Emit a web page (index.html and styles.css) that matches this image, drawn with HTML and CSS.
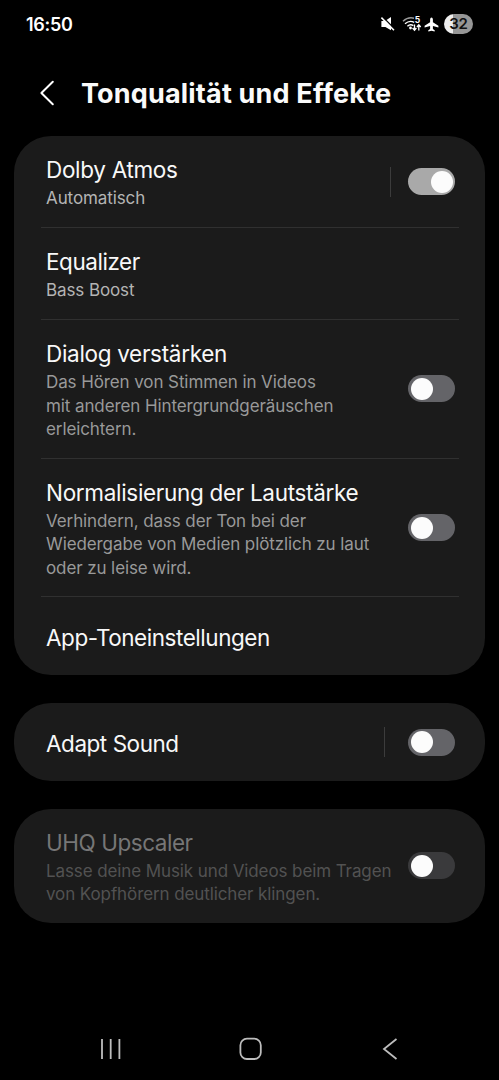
FILE: index.html
```html
<!DOCTYPE html>
<html lang="de">
<head>
<meta charset="utf-8">
<title>Tonqualität und Effekte</title>
<link rel="stylesheet" href="styles.css">
</head>
<body>
<div class="screen">
  <div class="status">
    <span class="clock">16:50</span>
    <div class="status-icons">
      <svg class="mute" width="16" height="16" viewBox="0 0 16 16"><path d="M1.4 5H5L11 1V14.2L5.4 11H1.4Z" fill="#fff"/><path d="M2.4 .8L15.2 13.4" stroke="#000" stroke-width="1.4"/><path d="M1.4 1.6L14 14.2" stroke="#fff" stroke-width="1.5"/></svg>
      <svg class="wifi" width="20" height="16" viewBox="0 0 20 16"><g fill="none" stroke="#fff" stroke-width="1.4"><path d="M1 5.2Q6 .6 12 2.2" stroke="#999"/><path d="M3 7.8Q7.5 3.8 12.2 6.4"/><path d="M5.4 10.2Q8.3 7.6 11.4 9.6"/></g><circle cx="8.5" cy="12" r="1.4" fill="#fff"/><text x="12.8" y="7" class="band">5</text><path d="M12.5 8.5V14M10.6 12L12.5 14.2 14.4 12M16.8 14.5V9M14.9 11L16.8 8.8 18.7 11" fill="none" stroke="#fff" stroke-width="1.3"/></svg>
      <svg class="plane" width="15" height="15" viewBox="0 0 15 15"><path d="M7.5 .6Q8.8 .8 8.9 2.6V5.3L14.4 8.7V10.6L8.9 9V12L10.7 13.3V14.5L7.5 13.7 4.3 14.5V13.3L6.1 12V9L.6 10.6V8.7L6.1 5.3V2.6Q6.2 .8 7.5 .6Z" fill="#fff"/></svg>
      <span class="battery">32</span>
    </div>
  </div>
  <header class="header">
    <svg class="back" width="16" height="26" viewBox="0 0 16 26"><path d="M13.8 1.8L2.4 13 13.8 24.2" fill="none" stroke="#fff" stroke-width="2" stroke-linecap="round" stroke-linejoin="round"/></svg>
    <h1 class="heading">Tonqualität und Effekte</h1>
  </header>
  <main class="cards">
    <section class="card">
      <div class="row short">
        <div class="text"><div class="title">Dolby Atmos</div><div class="sub value">Automatisch</div></div>
        <i class="bar"></i><span class="toggle on"></span>
      </div>
      <div class="row short">
        <div class="text"><div class="title tight">Equalizer</div><div class="sub value">Bass Boost</div></div>
      </div>
      <div class="row tall">
        <div class="text"><div class="title">Dialog verstärken</div><div class="sub">Das Hören von Stimmen in Videos<br>mit anderen Hintergrundgeräuschen<br>erleichtern.</div></div>
        <span class="toggle"></span>
      </div>
      <div class="row tall">
        <div class="text"><div class="title">Normalisierung der Lautstärke</div><div class="sub">Verhindern, dass der Ton bei der<br>Wiedergabe von Medien plötzlich zu laut<br>oder zu leise wird.</div></div>
        <span class="toggle"></span>
      </div>
      <div class="row single">
        <div class="text"><div class="title tight">App-Toneinstellungen</div></div>
      </div>
    </section>
    <section class="card">
      <div class="row single">
        <div class="text"><div class="title tight">Adapt Sound</div></div>
        <i class="bar wide"></i><span class="toggle"></span>
      </div>
    </section>
    <section class="card">
      <div class="row medium disabled">
        <div class="text"><div class="title tight">UHQ Upscaler</div><div class="sub">Lasse deine Musik und Videos beim Tragen<br>von Kopfhörern deutlicher klingen.</div></div>
        <span class="toggle"></span>
      </div>
    </section>
  </main>
  <nav class="nav">
    <svg width="24" height="24" viewBox="0 0 24 24"><path d="M3 2V22M11.7 2V22M20.4 2V22" stroke="#bdbdbd" stroke-width="1.8"/></svg>
    <svg width="24" height="24" viewBox="0 0 24 24"><rect x="1.4" y="1.6" width="20.4" height="20.4" rx="6.6" fill="none" stroke="#bdbdbd" stroke-width="1.8"/></svg>
    <svg width="24" height="24" viewBox="0 0 24 24"><path d="M18.5 2L6 12 18.5 22" fill="none" stroke="#bdbdbd" stroke-width="1.8"/></svg>
  </nav>
</div>
</body>
</html>
```
FILE: styles.css
```css
* { box-sizing: border-box; }
body { margin: 0; background: #000; font-family: Inter, Roboto, sans-serif; }
.screen { width: 499px; height: 1080px; background: #000; display: flex; flex-direction: column; overflow: hidden; }
.status { height: 48px; flex: none; display: flex; justify-content: space-between; align-items: center; padding: 0 26px; }
.clock { color: #fff; font-size: 18px; font-weight: 600; letter-spacing: -.3px; }
.status-icons { display: flex; align-items: center; }
.mute { margin-right: 6px; }
.wifi { margin-right: 2px; }
.plane { margin-right: 5px; }
.band { font: 700 8.5px Inter, sans-serif; fill: #fff; }
.battery { width: 29px; height: 20px; border-radius: 10px; background: linear-gradient(90deg, #eee 32%, #969696 32%); color: #111; font-size: 15px; font-weight: 600; line-height: 20px; text-align: center; letter-spacing: -.3px; }
.header { height: 88px; flex: none; display: flex; align-items: center; padding: 2px 0 0 39px; }
.back { margin-right: 26px; }
.heading { margin: 0; padding-top: 2px; color: #fafafa; font-size: 27px; line-height: 34px; font-weight: 700; letter-spacing: .18px; white-space: nowrap; }
.cards { flex: 1; display: flex; flex-direction: column; gap: 27.7px; padding: 0 14px; }
.card { background: #1b1b1b; border-radius: 37px; padding: 0 26px 0 27px; }
.row { display: flex; align-items: center; padding: 0 4px 0 5px; border-bottom: 1px solid #303030; }
.row:last-child { border-bottom: 0; }
.short { height: 92px; }
.tall { height: 138.7px; }
.single { height: 78px; }
.medium { height: 114px; }
.text { flex: 1; align-self: flex-start; padding-top: 19px; white-space: nowrap; }
.single .text { padding-top: 26px; }
.title { color: #f8f8f8; font-size: 22.5px; line-height: 29px; letter-spacing: -.31px; }
.title.tight { letter-spacing: -.46px; }
.sub { color: #999; font-size: 17px; line-height: 23.5px; margin-top: 3px; letter-spacing: -.1px; }
.value { color: #b4b4b4; }
.bar { width: 1px; height: 30px; background: #3c3c3c; margin-right: 17px; }
.bar.wide { margin-right: 23px; }
.toggle { width: 47.5px; height: 27px; flex: none; border-radius: 14px; background: #646468; padding: 2.5px 2.5px 2.5px 3.1px; display: flex; }
.toggle::before { content: ""; width: 22px; height: 22px; border-radius: 50%; background: #fcfcfc; }
.toggle.on { background: #a9a9a9; justify-content: flex-end; }
.disabled .title { color: #767676; }
.disabled .sub { color: #525252; }
.disabled .toggle { background: #3a3a3c; }
.nav { height: 62px; flex: none; display: flex; justify-content: space-between; padding: 19px 97px 0 99px; }
```
